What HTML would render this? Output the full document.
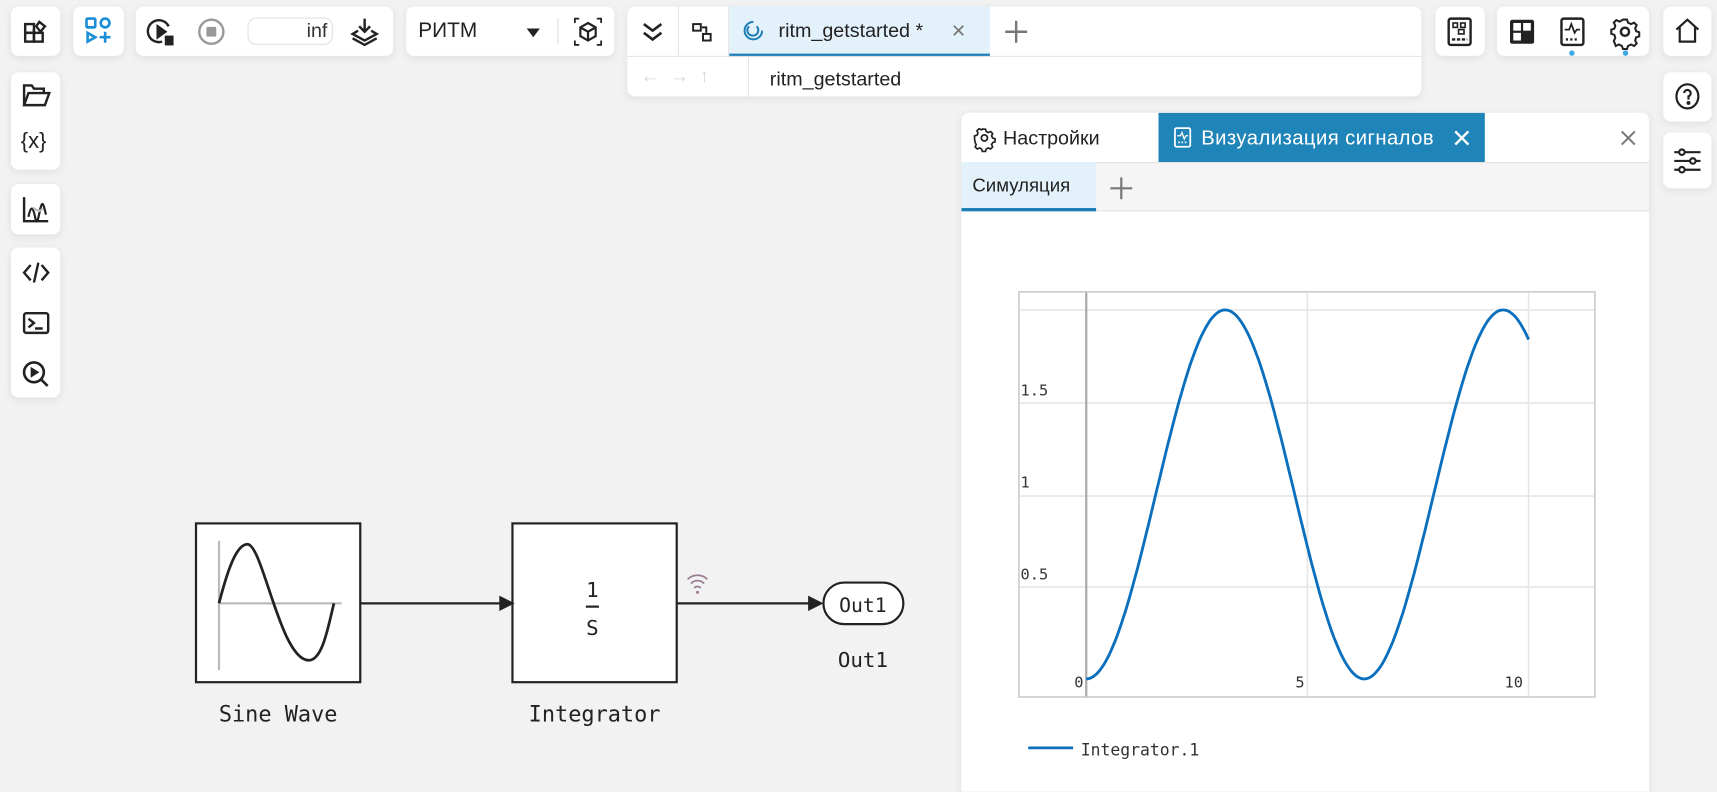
<!DOCTYPE html>
<html><head><meta charset="utf-8"><style>
html,body{margin:0;padding:0;width:1717px;height:771px;overflow:hidden;background:#f2f2f2;font-family:"Liberation Sans",sans-serif;}
#w{position:absolute;left:0;top:0;width:1568px;height:704px;transform:scale(1.095);transform-origin:0 0;}
.b{position:absolute;background:#fff;border-radius:7px;box-shadow:0 2px 8px rgba(0,0,0,.08);}
.ic{position:absolute;}
svg{overflow:visible}
.mono{font-family:"DejaVu Sans Mono","Liberation Mono",monospace;}
</style></head><body><div id="w">
<div class="b" style="left:10px;top:6px;width:45px;height:45px">
<svg class="ic" style="left:11px;top:11px" width="24" height="24" fill="none" stroke="#222" stroke-width="2.2"><rect x="2" y="5" width="8" height="8"/><rect x="2" y="13" width="8" height="8"/><rect x="10" y="13" width="8" height="8"/><path d="M10 13V9M15 3l5 4-4 5-4-5z"/></svg></div>
<div class="b" style="left:67px;top:6px;width:46px;height:45px">
<svg class="ic" style="left:10px;top:9px" width="26" height="28" fill="none" stroke="#1a8fd8" stroke-width="2.4"><rect x="2" y="2" width="8" height="8" rx="1"/><circle cx="19" cy="6" r="4"/><path d="M3 15l7 4-7 4z"/><path d="M19 14v10M14 19h10"/></svg></div>
<div class="b" style="left:124px;top:6px;width:235px;height:45px">
<svg class="ic" style="left:10px;top:10px" width="28" height="28" fill="none" stroke="#222" stroke-width="2.2"><path d="M20 8A10 10 0 1 0 14 22"/><path d="M10 8l7 5-7 5z" fill="#222"/><rect x="17" y="17" width="7" height="8" fill="#222" stroke-width="1"/></svg>
<svg class="ic" style="left:56px;top:10px" width="26" height="26"><circle cx="13" cy="13" r="11" fill="none" stroke="#999" stroke-width="2.2"/><rect x="8.5" y="8.5" width="9" height="9" rx="1" fill="#999"/></svg>
<div style="position:absolute;left:102px;top:10px;width:78px;height:25px;border:1px solid #e2e2e2;border-radius:8px;font-size:18px;color:#333;text-align:right;box-sizing:border-box;padding-right:4px;line-height:23px">inf</div>
<svg class="ic" style="left:196px;top:9px" width="26" height="28" fill="none" stroke="#222" stroke-width="2.2"><path d="M13 2v11M8 9l5 5 5-5"/><path d="M7 13l-5 3 11 6 11-6-5-3"/><path d="M2 20l11 6 11-6"/></svg></div>
<div class="b" style="left:371px;top:6px;width:190px;height:45px">
<div style="position:absolute;left:11px;top:12px;font-size:19px;color:#222">РИТМ</div>
<svg class="ic" style="left:109px;top:19px" width="14" height="10"><path d="M1 1h12L7 9z" fill="#222"/></svg>
<div style="position:absolute;left:138px;top:11px;width:1px;height:23px;background:#ddd"></div>
<svg class="ic" style="left:152px;top:9px" width="28" height="28" fill="none" stroke="#222" stroke-width="2"><path d="M14 6l7 4v8l-7 4-7-4v-8zM7 10l7 4 7-4M14 14v8"/><path d="M2 6V2h4M26 6V2h-4M2 22v4h4M26 22v4h-4" stroke-width="1.6"/></svg></div>
<div class="b" style="left:573px;top:6px;width:725px;height:82px;border-radius:7px">
<div style="position:absolute;left:0;top:0;width:46px;height:45px;border-right:1px solid #e4e4e4"></div>
<svg class="ic" style="left:12px;top:13px" width="22" height="20" fill="none" stroke="#222" stroke-width="2.4"><path d="M3 3l8 6 8-6M3 11l8 6 8-6"/></svg>
<div style="position:absolute;left:46px;top:0;width:46px;height:45px;border-right:1px solid #e4e4e4"></div>
<svg class="ic" style="left:59px;top:14px" width="20" height="20" fill="none" stroke="#222" stroke-width="1.8"><rect x="1" y="2" width="7" height="6"/><rect x="10" y="11" width="7" height="6"/><path d="M9 5h4v5"/></svg>
<div style="position:absolute;left:93px;top:0;width:238px;height:43px;background:#e3f1fa;border-bottom:3px solid #1a7db5"></div>
<svg class="ic" style="left:106px;top:13px" width="18" height="18" fill="none" stroke="#1a7db5" stroke-width="1.8"><path d="M9 1a8 8 0 1 0 8 8M5 5a5 5 0 1 0 7 0"/></svg>
<div style="position:absolute;left:138px;top:12px;font-size:18px;color:#222">ritm_getstarted *</div>
<div style="position:absolute;left:296px;top:9px;font-size:22px;color:#777">×</div>
<svg class="ic" style="left:344px;top:12px" width="22" height="22" stroke="#777" stroke-width="2.2"><path d="M11 1v20M1 11h20"/></svg>
<div style="position:absolute;left:0;top:45px;width:725px;height:1px;background:#e4e4e4"></div>
<div style="position:absolute;left:110px;top:46px;width:1px;height:36px;background:#e4e4e4"></div>
<div style="position:absolute;left:12px;top:54px;font-size:17px;color:#d6d6d6;letter-spacing:10px">←→↑</div>
<div style="position:absolute;left:130px;top:56px;font-size:18px;color:#222">ritm_getstarted</div>
</div>
<div class="b" style="left:1311px;top:6px;width:45px;height:45px">
<svg class="ic" style="left:10px;top:9px" width="24" height="28" fill="none" stroke="#222" stroke-width="2.2"><rect x="2" y="2" width="20" height="24" rx="2"/><rect x="6" y="6" width="4" height="4" stroke-width="1.5"/><rect x="13" y="6" width="4" height="4" stroke-width="1.5"/><rect x="11" y="12" width="5" height="4" stroke-width="1.5"/><path d="M5 21h14" stroke-dasharray="3 1.5"/></svg></div>
<div class="b" style="left:1367px;top:6px;width:139px;height:45px">
<svg class="ic" style="left:10px;top:10px" width="26" height="26"><rect x="2" y="2" width="22" height="22" rx="2" fill="#222"/><rect x="5" y="5" width="7" height="7" fill="#fff"/><rect x="14" y="5" width="7" height="7" fill="#fff"/><rect x="5" y="14" width="7" height="7" fill="#fff"/></svg>
<svg class="ic" style="left:57px;top:9px" width="24" height="28" fill="none" stroke="#222" stroke-width="2.2"><rect x="2" y="2" width="20" height="24" rx="2"/><path d="M5 12h4l2-5 3 8 2-3h3" stroke-width="1.6"/><path d="M6 21h12" stroke-dasharray="2 2"/></svg>
<div style="position:absolute;left:66px;top:40px;width:5px;height:5px;border-radius:50%;background:#3fa9e8"></div>
<svg class="ic" style="left:104px;top:10px" width="26" height="26" viewBox="0 0 28 28" fill="none" stroke="#222" stroke-width="2.4"><circle cx="14" cy="14" r="4"/><path d="M12 2h4l1 3 3 1.5 3-1.5 2.5 2.5-1.5 3 1 3 3 1v4l-3 1-1 3 1.5 3-2.5 2.5-3-1.5-3 1.5-1 3h-4l-1-3-3-1.5-3 1.5L3 23l1.5-3-1-3-3-1v-4l3-1 1-3L3 5l2.5-2.5 3 1.5 3-1.5z" stroke-width="2"/></svg>
<div style="position:absolute;left:115px;top:40px;width:5px;height:5px;border-radius:50%;background:#3fa9e8"></div>
</div>
<div class="b" style="left:1519px;top:6px;width:44px;height:45px">
<svg class="ic" style="left:10px;top:10px" width="24" height="24" fill="none" stroke="#222" stroke-width="2"><path d="M2 11L12 2l10 9M5 9v13h14V9"/></svg></div>
<div class="b" style="left:1519px;top:66px;width:44px;height:45px">
<svg class="ic" style="left:10px;top:10px" width="24" height="24" fill="none" stroke="#222" stroke-width="2"><ellipse cx="12" cy="12" rx="10" ry="11"/><path d="M9 9a3 3 0 1 1 4 3v3"/><circle cx="13" cy="18" r="0.8" fill="#222"/></svg></div>
<div class="b" style="left:1519px;top:121px;width:44px;height:51px">
<svg class="ic" style="left:9px;top:13px" width="26" height="26" fill="none" stroke="#222" stroke-width="2"><path d="M1 5h24M1 13h24M1 21h24"/><circle cx="8" cy="5" r="2.5" fill="#fff"/><circle cx="18" cy="13" r="2.5" fill="#fff"/><circle cx="8" cy="21" r="2.5" fill="#fff"/></svg></div>
<div class="b" style="left:10px;top:66px;width:45px;height:89px">
<svg class="ic" style="left:10px;top:9px" width="26" height="24" fill="none" stroke="#222" stroke-width="2.2"><path d="M2 21V3h7l2 3h9v4M2 21l4-11h19l-4 11z"/></svg>
<div style="position:absolute;left:9px;top:52px;font-size:20px;color:#222">{x}</div></div>
<div class="b" style="left:10px;top:168px;width:45px;height:46px">
<svg class="ic" style="left:10px;top:10px" width="26" height="26" fill="none" stroke="#222" stroke-width="2.2"><path d="M2 2v22h22"/><path d="M6 20c2-10 4-10 6 0s3 0 5-8 3-2 5 6" stroke-width="2"/><path d="M10 12c3 0 5 6 9 0" stroke="#bbb" stroke-width="2"/></svg></div>
<div class="b" style="left:10px;top:226px;width:45px;height:137px">
<svg class="ic" style="left:10px;top:11px" width="26" height="24" fill="none" stroke="#222" stroke-width="2.2"><path d="M8 5l-6 7 6 7M18 5l6 7-6 7M15 3l-4 18"/></svg>
<svg class="ic" style="left:10px;top:57px" width="26" height="24" fill="none" stroke="#222" stroke-width="2.2"><rect x="2" y="3" width="22" height="18" rx="2"/><path d="M6 8l5 4-5 4M12 17h7"/></svg>
<svg class="ic" style="left:10px;top:103px" width="26" height="26" fill="none" stroke="#222" stroke-width="2.4"><circle cx="11" cy="11" r="9"/><path d="M17.5 17.5l6 6"/><path d="M8 6l8 5-8 5z" fill="#222" stroke="none"/></svg></div>
<svg style="position:absolute;left:0;top:0" width="870" height="704">
<rect x="179" y="478" width="150" height="145" fill="#fff" stroke="#222" stroke-width="2"/>
<path d="M200 494V612M200 551H312" stroke="#bbb" stroke-width="2" fill="none"/>
<path d="M200 551C208 520 216 497 226 497C240 497 256 603 282 603C295 603 300 570 305 551" stroke="#222" stroke-width="2.5" fill="none"/>
<rect x="468" y="478" width="150" height="145" fill="#fff" stroke="#222" stroke-width="2"/>
<path d="M329 551H458" stroke="#222" stroke-width="2"/><path d="M456 544l14 7-14 7z" fill="#222"/>
<path d="M618 551H740" stroke="#222" stroke-width="2"/><path d="M738 544l14 7-14 7z" fill="#222"/>
<rect x="752" y="532" width="73" height="38" rx="19" fill="#fff" stroke="#222" stroke-width="2"/>
<path d="M535 554h12" stroke="#222" stroke-width="2"/>
<g fill="none" stroke="#9a7b92" stroke-width="1.6"><path d="M628 529a13 13 0 0 1 18 0M631 533a8 8 0 0 1 12 0M634 537a4 4 0 0 1 6 0"/></g>
<circle cx="637" cy="541" r="1.4" fill="#9a7b92"/>
<text x="541" y="545" class="mono" font-size="19" text-anchor="middle" fill="#222">1</text>
<text x="541" y="580" class="mono" font-size="19" text-anchor="middle" fill="#222">S</text>
<text x="788" y="559" class="mono" font-size="18" text-anchor="middle" fill="#222">Out1</text>
<text x="788" y="609" class="mono" font-size="19" text-anchor="middle" fill="#222">Out1</text>
<text x="254" y="659" class="mono" font-size="20" text-anchor="middle" fill="#222">Sine Wave</text>
<text x="543" y="659" class="mono" font-size="20" text-anchor="middle" fill="#222">Integrator</text>
</svg>
<div class="b" style="left:878px;top:103px;width:628px;height:620px;border-radius:7px 7px 0 0;overflow:hidden">
<svg class="ic" style="left:12px;top:14px" width="18" height="18" fill="none" stroke="#222" stroke-width="1.6"><circle cx="9" cy="9" r="2.8"/><path d="M7.5 1h3l.7 2.3 2 1 2.2-1 2 2-1 2.2 1 2 2.3.7v3l-2.3.7-1 2 1 2.2-2 2-2.2-1-2 1-.7 2.3h-3l-.7-2.3-2-1-2.2 1-2-2 1-2.2-1-2L0 10.5v-3l2.3-.7 1-2-1-2.2 2-2 2.2 1 2-1z" transform="scale(.95)"/></svg>
<div style="position:absolute;left:38px;top:13px;font-size:18px;color:#222">Настройки</div>
<div style="position:absolute;left:180px;top:0;width:298px;height:45px;background:#1f84b8"></div>
<svg class="ic" style="left:194px;top:13px" width="16" height="20" fill="none" stroke="#fff" stroke-width="1.6"><rect x="1" y="1" width="14" height="17" rx="1.5"/><path d="M3 8h3l1.5-3 2 6 1.5-3h2" stroke-width="1.2"/><path d="M4 14h8" stroke-dasharray="1.5 1.5"/></svg>
<div style="position:absolute;left:219px;top:12px;font-size:18.5px;letter-spacing:0.4px;color:#fff">Визуализация сигналов</div>
<svg class="ic" style="left:450px;top:16px" width="14" height="14" stroke="#fff" stroke-width="2.2"><path d="M1 1l12 12M13 1L1 13"/></svg>
<svg class="ic" style="left:602px;top:16px" width="14" height="14" stroke="#777" stroke-width="1.8"><path d="M1 1l12 12M13 1L1 13"/></svg>
<div style="position:absolute;left:0;top:45px;width:628px;height:45px;background:#f5f5f5;border-top:1px solid #e4e4e4;border-bottom:1px solid #e4e4e4;box-sizing:border-box"></div>
<div style="position:absolute;left:0;top:45px;width:123px;height:45px;background:#e3f1fa;border-bottom:3px solid #1a7db5;box-sizing:border-box"></div>
<div style="position:absolute;left:10px;top:57px;font-size:17px;color:#222">Симуляция</div>
<svg class="ic" style="left:135px;top:58px" width="22" height="22" stroke="#777" stroke-width="2"><path d="M11 1v20M1 11h20"/></svg>
</div>
<svg style="position:absolute;left:0;top:0" width="1568" height="704">
<rect x="930.5" y="266.5" width="526" height="370" fill="#fff" stroke="#ccc" stroke-width="1.5"/>
<g stroke="#e6e6e6" stroke-width="1.5"><path d="M931 283H1456M931 368H1456M931 453H1456M931 536H1456M1194 267V636M1396 267V636"/></g>
<path d="M992 267V636" stroke="#aaa" stroke-width="2"/>
<path id="cv" d="" fill="none" stroke="#0a70bd" stroke-width="2.6"/>
<g class="mono" font-size="14" fill="#333"><text x="932" y="361">1.5</text><text x="932" y="445">1</text><text x="932" y="529">0.5</text><text x="981" y="628">0</text><text x="1183" y="628">5</text><text x="1374" y="628">10</text><text x="987" y="690" font-size="15">Integrator.1</text></g>
<path d="M939 683H980" stroke="#0a70bd" stroke-width="2.6"/>
</svg>
<script>
var d="";for(var i=0;i<=200;i++){var t=i*0.05;var x=992+t*40.4;var y=620-(1-Math.cos(t))*168.5;d+=(i?"L":"M")+x.toFixed(1)+" "+y.toFixed(1);}document.getElementById("cv").setAttribute("d",d);
</script>
</div></body></html>
